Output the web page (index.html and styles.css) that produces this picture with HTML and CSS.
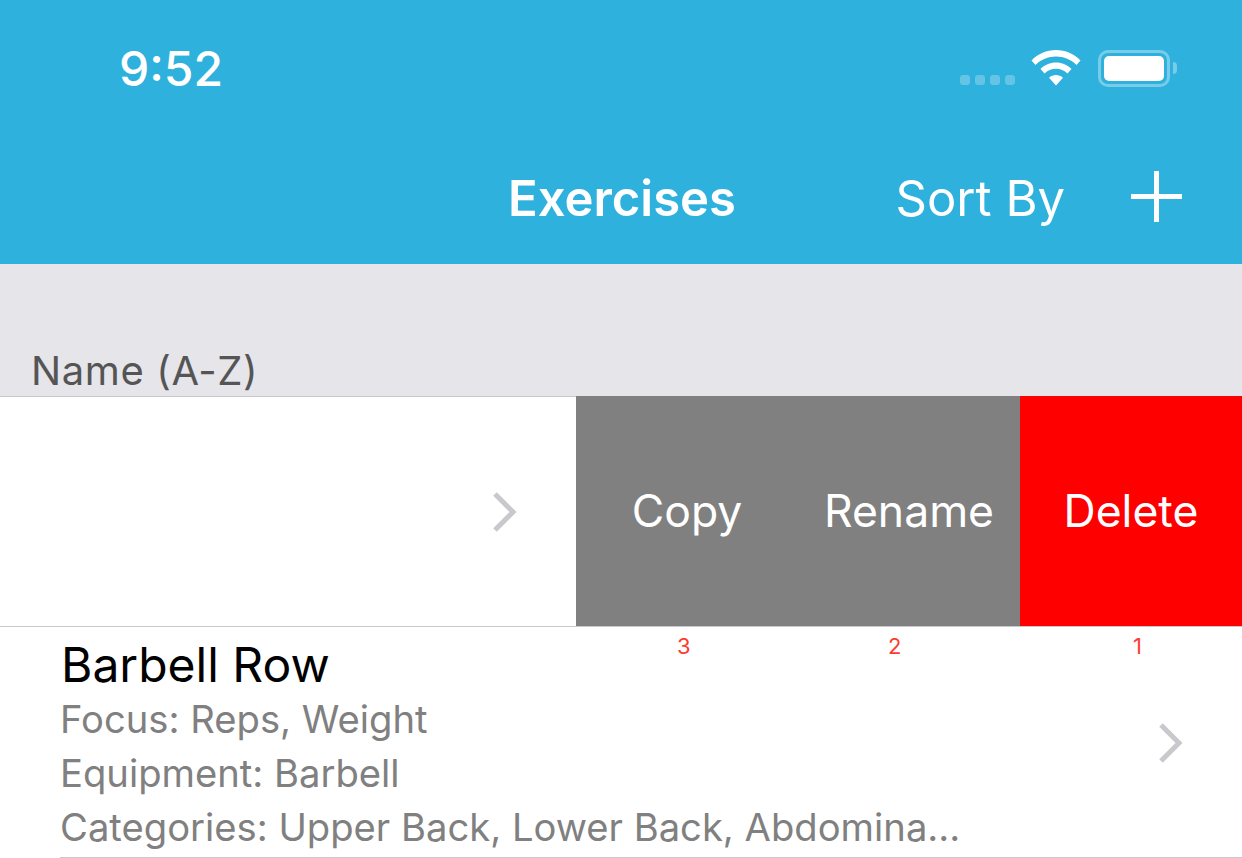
FILE: index.html
```html
<!DOCTYPE html>
<html lang="en">
<head>
    <title>Exercises</title>
    <link rel="stylesheet" href="styles.css">
</head>
<body>
    <div class="header">
        <div class="status">
            <span class="time">9:52</span>
            <div class="status-icons">
                <div class="signal"><i></i><i></i><i></i><i></i></div>
                <svg class="wifi" width="50" height="36" viewBox="0 0 50 36">
                    <path fill="#fff" d="M25 0C34.500 0 43 3.800 49.500 10.500L45.500 15C40 9.500 33 6.500 25 6.500S10 9.500 4.500 15L.5 10.500C7 3.800 15.500 0 25 0Z"/>
                    <path fill="#fff" d="M25 12.500C31 12.500 36.500 15 40.500 19L36.500 23.500C33.500 20.500 29.500 18.800 25 18.800S16.500 20.500 13.500 23.500L9.500 19C13.500 15 19 12.500 25 12.500Z"/>
                    <path fill="#fff" d="M25 25C27.500 25 30 26 32 27.800L25 35.500L18 27.800C20 26 22.500 25 25 25Z"/>
                </svg>
                <div class="battery">
                    <div class="battery-body"><div class="battery-level"></div></div>
                    <div class="battery-cap"></div>
                </div>
            </div>
        </div>
        <div class="nav">
            <span class="nav-title">Exercises</span>
            <div class="nav-right">
                <span class="sort">Sort By</span>
                <svg class="plus" width="51" height="51" viewBox="0 0 51 51"><path fill="#fff" d="M23 0h5v23h23v5H28v23h-5V28H0v-5h23z"/></svg>
            </div>
        </div>
    </div>

    <div class="section">Name (A-Z)</div>

    <div class="swipe-row">
        <div class="swipe-content">
            <svg class="chevron" width="24" height="40" viewBox="0 0 24 40"><path fill="none" stroke="#c8c8cd" stroke-width="5" d="M2 2l18 18L2 38"/></svg>
        </div>
        <button class="action copy">Copy</button>
        <button class="action rename">Rename</button>
        <button class="action delete">Delete</button>
    </div>

    <div class="row">
        <div class="row-text">
            <div class="row-name">Barbell Row</div>
            <div class="row-sub">Focus: Reps, Weight</div>
            <div class="row-sub">Equipment: Barbell</div>
            <div class="row-sub">Categories: Upper Back, Lower Back, Abdomina…</div>
        </div>
        <svg class="chevron" width="24" height="40" viewBox="0 0 24 40"><path fill="none" stroke="#c8c8cd" stroke-width="5" d="M2 2l18 18L2 38"/></svg>
        <span class="order order-3">3</span>
        <span class="order order-2">2</span>
        <span class="order order-1">1</span>
    </div>
</body>
</html>
```

FILE: styles.css
```css
body {
    font-family: 'Inter', 'Liberation Sans', sans-serif;
    margin: 0;
    padding: 0;
    background: #fff;
    overflow: hidden;
}
.header {
    background: #2fb1de;
    height: 264px;
    color: #fff;
}
.status {
    display: flex;
    justify-content: space-between;
    align-items: center;
    height: 136px;
    padding: 0 65px 0 119px;
}
.time {
    font-size: 48px;
    font-weight: 500;
}
.status-icons {
    display: flex;
    align-items: center;
    gap: 17px;
}
.signal {
    display: flex;
    gap: 5px;
    margin-top: 24px;
    margin-right: -1px;
}
.signal i {
    width: 10px;
    height: 10px;
    border-radius: 3px;
    background: rgba(255, 255, 255, 0.25);
}
.battery {
    display: flex;
    align-items: center;
}
.battery-body {
    width: 72px;
    height: 37px;
    box-sizing: border-box;
    border: 3px solid rgba(255, 255, 255, 0.35);
    border-radius: 10px;
    padding: 3px;
}
.battery-level {
    height: 100%;
    background: #fff;
    border-radius: 5px;
}
.battery-cap {
    width: 4px;
    height: 12px;
    margin-left: 3px;
    background: rgba(255, 255, 255, 0.35);
    border-radius: 0 6px 6px 0;
}
.nav {
    display: grid;
    grid-template-columns: 1fr auto 1fr;
    align-items: center;
    height: 124px;
    padding: 0 59px 0 61px;
}
.nav-title {
    grid-column: 2;
    font-size: 49px;
    font-weight: 600;
}
.nav-right {
    grid-column: 3;
    display: flex;
    justify-content: flex-end;
    align-items: center;
    gap: 66px;
    font-size: 49px;
}
.plus {
    margin-bottom: 3px;
    margin-right: 1px;
}
.section {
    box-sizing: border-box;
    height: 133px;
    padding: 85px 0 0 31px;
    background: #e5e5ea;
    border-bottom: 1px solid #c8c8cc;
    color: #555;
    font-size: 40px;
    letter-spacing: 0.6px;
    line-height: 44px;
}
.swipe-row {
    display: flex;
    height: 230px;
    margin-top: -1px;
}
.swipe-content {
    flex: 0 0 576px;
    box-sizing: border-box;
    display: flex;
    justify-content: flex-end;
    align-items: center;
    padding-right: 59px;
    border-top: 1px solid #c8c8cc;
}
.action {
    border: none;
    padding: 0;
    color: #fff;
    font-family: inherit;
    font-size: 44.500px;
}
.copy {
    flex: 0 0 222px;
    background: #808080;
}
.rename {
    flex: 0 0 222px;
    background: #808080;
}
.delete {
    flex: 0 0 222px;
    background: #ff0000;
}
.row {
    position: relative;
    display: flex;
    justify-content: space-between;
    align-items: center;
    box-sizing: border-box;
    height: 232px;
    padding: 0 59px 0 61px;
    border-top: 1px solid #c8c8cc;
}
.row::after {
    content: "";
    position: absolute;
    left: 60px;
    right: 0;
    bottom: 0;
    height: 1px;
    background: #c8c8cc;
}
.row-text {
    padding-top: 6px;
}
.row-name {
    font-size: 48px;
    line-height: 54px;
    color: #000;
}
.row-sub {
    margin-left: -1px;
    font-size: 38.200px;
    line-height: 54px;
    color: #808080;
}
.order {
    position: absolute;
    top: 6px;
    color: #ff3b30;
    font-size: 22px;
}
.order-3 { left: 677px; }
.order-2 { left: 888px; }
.order-1 { left: 1133px; }
```
